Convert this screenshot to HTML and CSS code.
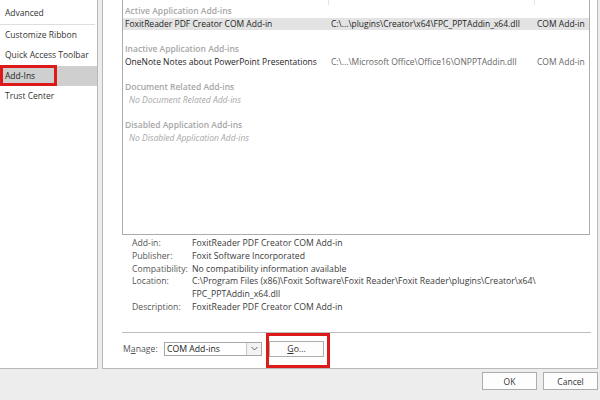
FILE: index.html
```html
<!DOCTYPE html>
<html>
<head>
<meta charset="utf-8">
<link rel="stylesheet" href="styles.css">
</head>
<body>
<div class="dialog">
  <div class="top">
    <nav class="nav">
      <div class="nav-item">Advanced</div>
      <div class="nav-sep"></div>
      <div class="nav-item">Customize Ribbon</div>
      <div class="nav-item">Quick Access Toolbar</div>
      <div class="nav-item selected">Add-Ins</div>
      <div class="nav-item">Trust Center</div>
    </nav>
    <main class="main">
      <div class="list">
        <div class="row header"><span class="cell"></span><span class="cell"></span><span class="cell type-head">Type</span></div>
        <div class="row group">Active Application Add-ins</div>
        <div class="row item sel"><span class="cell">FoxitReader PDF Creator COM Add-in</span><span class="cell">C:\...\plugins\Creator\x64\FPC_PPTAddin_x64.dll</span><span class="cell">COM Add-in</span></div>
        <div class="row blank"></div>
        <div class="row group">Inactive Application Add-ins</div>
        <div class="row item"><span class="cell">OneNote Notes about PowerPoint Presentations</span><span class="cell dim">C:\...\Microsoft Office\Office16\ONPPTAddin.dll</span><span class="cell dim">COM Add-in</span></div>
        <div class="row blank"></div>
        <div class="row group">Document Related Add-ins</div>
        <div class="row none">No Document Related Add-ins</div>
        <div class="row blank"></div>
        <div class="row group">Disabled Application Add-ins</div>
        <div class="row none">No Disabled Application Add-ins</div>
      </div>
      <div class="details">
        <span class="label">Add-in:</span><span class="value">FoxitReader PDF Creator COM Add-in</span>
        <span class="label">Publisher:</span><span class="value">Foxit Software Incorporated</span>
        <span class="label">Compatibility:</span><span class="value">No compatibility information available</span>
        <span class="label">Location:</span><span class="value">C:\Program Files (x86)\Foxit Software\Foxit Reader\Foxit Reader\plugins\Creator\x64\<br>FPC_PPTAddin_x64.dll</span>
        <span class="label">Description:</span><span class="value">FoxitReader PDF Creator COM Add-in</span>
      </div>
      <div class="sep"></div>
      <div class="manage">
        <span class="manage-label">M<u>a</u>nage:</span>
        <div class="select">
          <span class="select-text">COM Add-ins</span>
          <span class="select-btn"><svg width="7" height="5" viewBox="0 0 7 5"><polyline points="0.5,1 3.5,4 6.5,1" fill="none" stroke="#666" stroke-width="1"/></svg></span>
        </div>
        <div class="btn go"><u>G</u>o...</div>
      </div>
    </main>
  </div>
  <div class="bottom">
    <div class="btn dlg">OK</div>
    <div class="btn dlg">Cancel</div>
  </div>
  <div class="annot annot-addins"></div>
  <div class="annot annot-go"></div>
</div>
</body>
</html>
```

FILE: styles.css
```css
* { box-sizing: border-box; }
html, body { margin: 0; padding: 0; }
body {
  width: 600px;
  height: 400px;
  overflow: hidden;
  background: #ededed;
  font-family: "Open Sans", "Noto Sans", sans-serif;
  font-size: 8.5px;
  color: #333;
}
.dialog {
  position: relative;
  width: 600px;
  height: 400px;
  display: flex;
  flex-direction: column;
}
.top {
  height: 369px;
  display: flex;
}
.nav {
  width: 98px;
  background: #fff;
  border-right: 1px solid #b9b9b9;
  border-bottom: 1px solid #b9b9b9;
  padding-top: 3px;
}
.nav-item {
  height: 20.5px;
  line-height: 20.5px;
  padding-left: 5px;
  color: #333;
  white-space: nowrap;
}
.nav-item.selected {
  background: #cfcfcf;
  color: #1e1e1e;
}
.nav-sep {
  height: 1px;
  margin: 0 2px 0 0;
  background: #dedede;
}
.main {
  width: 496px;
  margin-left: 4px;
  background: #fff;
  border: 1px solid #b9b9b9;
  border-top: none;
  display: flex;
  flex-direction: column;
}
.list {
  margin: -10px 0 0 19px;
  width: 468px;
  height: 245px;
  border: 1px solid #ababab;
  flex-shrink: 0;
}
.row {
  display: grid;
  grid-template-columns: 206px 206px 1fr;
  height: 12.7px;
  line-height: 12.7px;
  white-space: nowrap;
}
.cell {
  padding-left: 2px;
  overflow: hidden;
}
.row.header { height: 14px; line-height: 8px; }
.row.header .cell { border-right: 1px solid #e3e3e3; color: #333; }
.row.header .cell:last-child { border-right: none; }
.type-head { padding-left: 4px; }
.row.group {
  display: block;
  padding-left: 2px;
  color: #a6a6a6;
  font-weight: 600;
}
.row.item { color: #1e1e1e; }
.row.sel { background: #e3e3e3; }
.cell.dim { color: #666; }
.row.none {
  display: block;
  padding-left: 6px;
  font-style: italic;
  color: #a8a8a8;
}
.details {
  margin: 2px 0 0 29px;
  display: grid;
  grid-template-columns: 60px 1fr;
  line-height: 12.8px;
  font-size: 8.7px;
  color: #3a3a3a;
}
.label { color: #555; }
.value { white-space: nowrap; }
.sep {
  margin: 18px 6px 0 19px;
  height: 1px;
  background: #bdbdbd;
}
.manage {
  display: flex;
  align-items: center;
  padding: 8px 0 0 20px;
  font-size: 8.7px;
}
.manage-label {
  width: 41px;
  color: #555;
}
.select {
  width: 98px;
  height: 14px;
  border: 1px solid #a8a8a8;
  display: flex;
  align-items: center;
  background: #fff;
}
.select-text {
  flex: 1;
  padding-left: 2px;
  color: #222;
  line-height: 12px;
}
.select-btn {
  width: 15px;
  height: 12px;
  border-left: 1px solid #c6c6c6;
  background: #f3f3f3;
  display: flex;
  align-items: center;
  justify-content: center;
}
.btn {
  border: 1px solid #adadad;
  background: #fdfdfd;
  display: flex;
  align-items: center;
  justify-content: center;
  color: #333;
}
.go {
  width: 55px;
  height: 16px;
  margin-left: 7px;
}
.bottom {
  flex: 1;
  display: flex;
  justify-content: flex-end;
  align-items: flex-start;
  gap: 6px;
  padding: 3px 2px 0 0;
}
.dlg {
  width: 55px;
  height: 18px;
}
.annot {
  position: absolute;
  border: 3px solid #dc1a1a;
}
.annot-addins {
  left: 0;
  top: 65px;
  width: 57px;
  height: 21px;
}
.annot-go {
  left: 266px;
  top: 333px;
  width: 64px;
  height: 35px;
}
```
